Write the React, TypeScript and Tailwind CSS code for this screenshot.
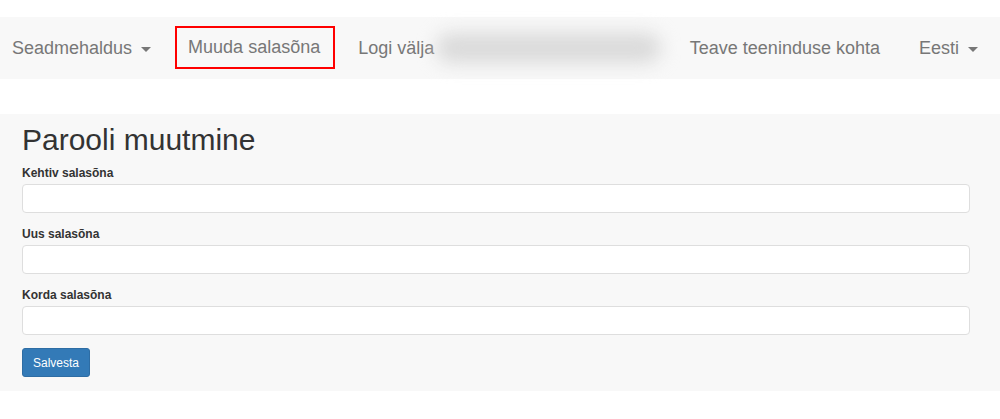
import React from 'react'

const font = { fontFamily: '"Liberation Sans", Arial, Helvetica, sans-serif' }

function Caret() {
  return <span className="inline-block ml-[9px] w-0 h-0 border-l-[5px] border-r-[5px] border-t-[5px] border-l-transparent border-r-transparent border-t-[#777] translate-y-[1px]" />
}

const fields = ['Kehtiv salasõna', 'Uus salasõna', 'Korda salasõna']

export default function App() {
  return (
    <div className="w-[1000px] h-[419px] bg-white overflow-hidden" style={font}>
      {/* Navbar */}
      <nav className="mt-[17px] h-[62px] bg-[#f8f8f8] flex items-center text-[18px] text-[#777]">
        <div className="pl-[12px] flex items-center">
          <span>Seadmehaldus</span>
          <Caret />
        </div>
        <div className="ml-[24px] mb-[1px] h-[43px] border-2 border-[#ff0000] pl-[11px] pr-[13px] flex items-center">
          Muuda salasõna
        </div>
        <div className="ml-[23px]">Logi välja</div>
        <div className="ml-[2px] w-[225px] h-[30px] rounded-full bg-[#dadada] blur-[9px]" />
        <div className="ml-auto flex items-center pr-[22px]">
          <span>Teave teeninduse kohta</span>
          <span className="ml-[39px]">Eesti</span>
          <Caret />
        </div>
      </nav>

      {/* Panel */}
      <div className="mt-[35px] bg-[#f8f8f8] px-[22px] pt-[9px] pb-[14px]">
        <h1 className="text-[30px] leading-[33px] text-[#333]">Parooli muutmine</h1>
        <form className="mt-[9px] flex flex-col gap-[13px]">
          {fields.map(f => (
            <div key={f} className="flex flex-col">
              <label className="text-[12px] leading-[17px] font-bold text-[#333] mb-[2px]">{f}</label>
              <input type="password" className="w-[948px] h-[29px] bg-white border border-[#dedede] rounded-[4px] px-2 text-[12px] outline-none" />
            </div>
          ))}
          <div>
            <button type="button" className="h-[29px] px-[10px] bg-[#337ab7] border border-[#2e6da4] rounded-[3px] text-white text-[12px] leading-[16px]">
              Salvesta
            </button>
          </div>
        </form>
      </div>
    </div>
  )
}
